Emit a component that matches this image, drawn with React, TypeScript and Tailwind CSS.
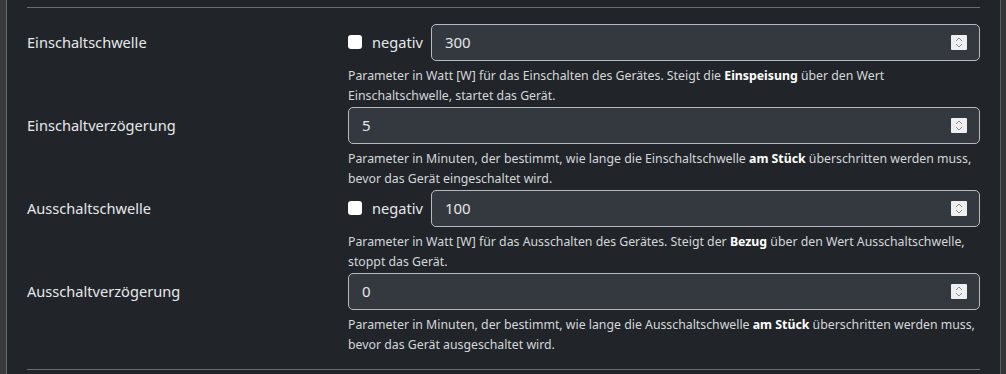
import type { ReactNode } from 'react';

// Schwellwerte eines Gerätes: Ein-/Ausschaltschwelle mit Verzögerung (dunkles Formular-Layout).
type Field = {
  label: string;
  value: string;
  negativ?: boolean;
  help: ReactNode;
};

const fields: Field[] = [
  {
    label: 'Einschaltschwelle',
    value: '300',
    negativ: true,
    help: (
      <>
        Parameter in Watt [W] für das Einschalten des Gerätes. Steigt die <b>Einspeisung</b> über den Wert
        Einschaltschwelle, startet das Gerät.
      </>
    ),
  },
  {
    label: 'Einschaltverzögerung',
    value: '5',
    help: (
      <>
        Parameter in Minuten, der bestimmt, wie lange die Einschaltschwelle <b>am Stück</b> überschritten werden muss,
        bevor das Gerät eingeschaltet wird.
      </>
    ),
  },
  {
    label: 'Ausschaltschwelle',
    value: '100',
    negativ: true,
    help: (
      <>
        Parameter in Watt [W] für das Ausschalten des Gerätes. Steigt der <b>Bezug</b> über den Wert Ausschaltschwelle,
        stoppt das Gerät.
      </>
    ),
  },
  {
    label: 'Ausschaltverzögerung',
    value: '0',
    help: (
      <>
        Parameter in Minuten, der bestimmt, wie lange die Ausschaltschwelle <b>am Stück</b> überschritten werden muss,
        bevor das Gerät ausgeschaltet wird.
      </>
    ),
  },
];

function Spinner() {
  return (
    <span className="flex h-[15px] w-[16px] items-center justify-center rounded-[1px] bg-[#efeff2]">
      <svg width="8" height="11" viewBox="0 0 8 11" fill="none" stroke="#8b8d92" strokeWidth="1">
        <path d="M1 4 L4 1 L7 4" />
        <path d="M1 7 L4 10 L7 7" />
      </svg>
    </span>
  );
}

function NumberInput({ value }: { value: string }) {
  return (
    <div className="flex h-[37px] flex-1 items-center justify-between rounded-[5px] border border-[#b6babf] bg-[#343940] pl-[13px] pr-[12px]">
      <span className="text-[15px] text-[#e4e6e9]">{value}</span>
      <Spinner />
    </div>
  );
}

function FieldRow({ field }: { field: Field }) {
  return (
    <div className="grid grid-cols-[321px_1fr]">
      <div className="flex h-[37px] items-center text-[14.6px] text-[#e6e8ea]">{field.label}</div>
      <div>
        <div className="flex items-center">
          {field.negativ && (
            <label className="mr-[8px] flex items-center">
              <span className="h-[14px] w-[14px] rounded-[3px] bg-white" />
              <span className="ml-[10px] text-[14.6px] text-[#e6e8ea]">negativ</span>
            </label>
          )}
          <NumberInput value={field.value} />
        </div>
        <p className="mt-[5px] mb-[1px] text-[12.3px] leading-[20px] text-[#d4d7da] [&_b]:font-bold [&_b]:text-white">
          {field.help}
        </p>
      </div>
    </div>
  );
}

export default function App() {
  return (
    <div
      className="flex h-[374px] overflow-hidden bg-[#212529]"
      style={{ fontFamily: '"Noto Sans", "Open Sans", sans-serif' }}
    >
      <div className="w-[7px] shrink-0 border-r border-[#68696b] bg-[#3b3b3c]" />
      <div className="flex-1 px-[20px] pt-[7px]">
        <div className="h-px bg-[#6a6d71]" />
        <div className="mt-[16px]">
          {fields.map((f) => (
            <FieldRow key={f.label} field={f} />
          ))}
        </div>
        <div className="mt-[13px] h-px bg-[#6a6d71]" />
      </div>
      <div className="w-[6px] shrink-0 border-l border-[#5c5d5f] bg-[#333436]" />
    </div>
  );
}
